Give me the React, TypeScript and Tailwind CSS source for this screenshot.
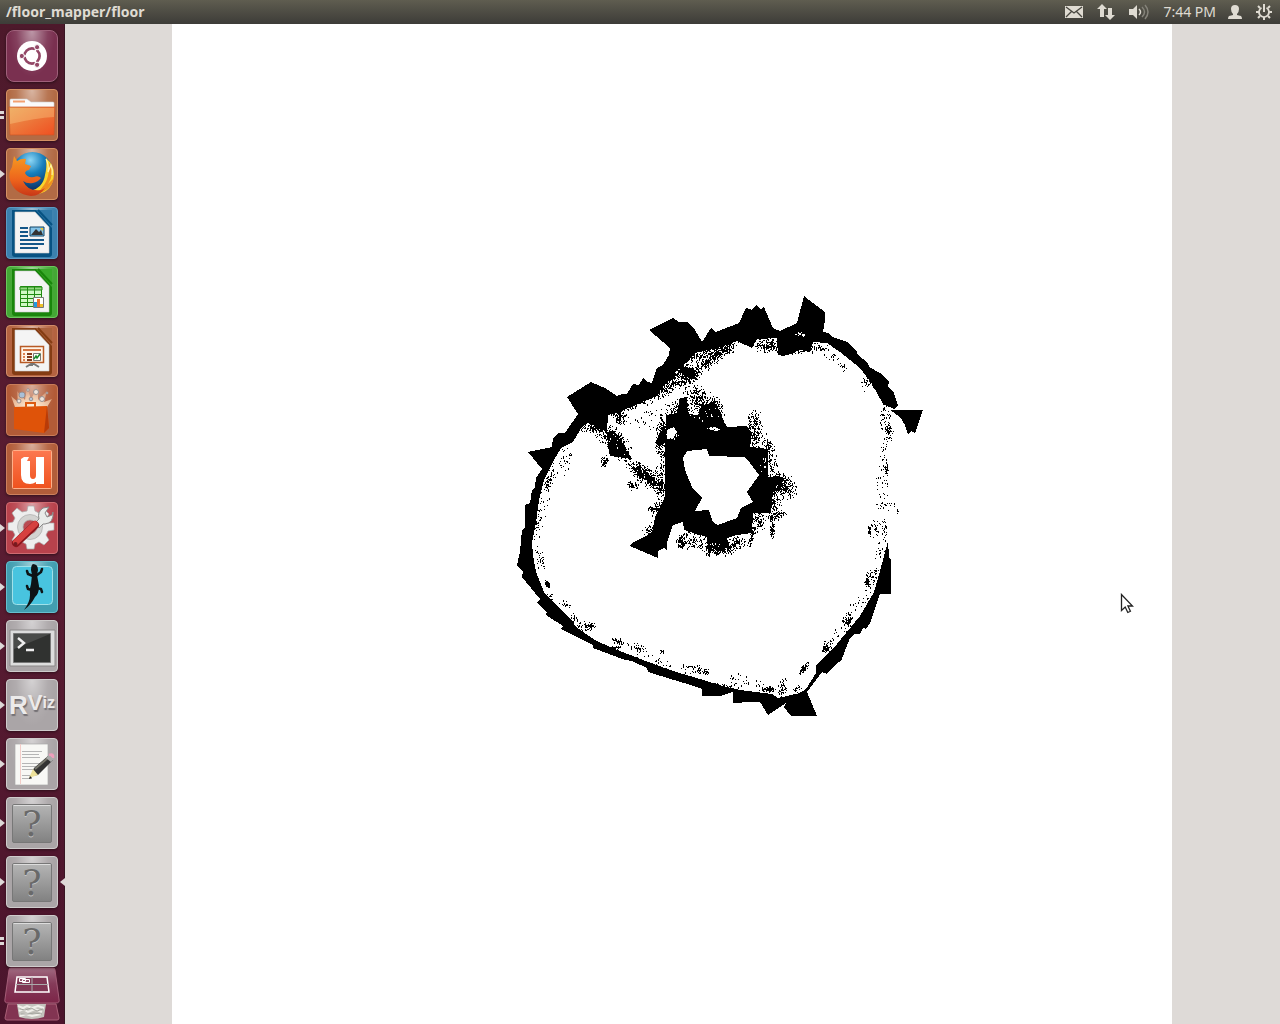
import React from "react";

type Cluster = [cx: number, cy: number, rx: number, ry: number, angle: number, count: number];

/* Obstacle cells scattered round the solid walls. */
const occupied: Cluster[] = [
  [716, 352, 24, 8, -28, 420],
  [698, 362, 22, 11, -30, 420],
  [690, 373, 9, 8, -10, 260],
  [672, 384, 26, 7, -22, 280],
  [640, 402, 32, 4, -20, 90],
  [620, 415, 7, 9, 0, 110],
  [640, 418, 30, 14, -20, 40],
  [766, 345, 13, 7, 0, 190],
  [795, 348, 20, 6, 0, 160],
  [819, 347, 10, 4, 10, 30],
  [832, 356, 14, 6, 40, 18],
  [843, 366, 6, 6, 0, 14],
  [867, 382, 8, 9, 30, 45],
  [885, 418, 6, 16, 0, 50],
  [889, 432, 5, 9, 0, 45],
  [883, 458, 5, 20, 0, 26],
  [886, 467, 2, 7, 0, 40],
  [882, 485, 6, 18, 0, 26],
  [884, 505, 12, 9, 0, 24],
  [897, 511, 1, 3, 0, 9],
  [869, 530, 2, 7, 0, 25],
  [875, 528, 6, 12, 0, 35],
  [884, 530, 3, 12, 0, 25],
  [880, 552, 6, 12, 0, 18],
  [872, 577, 6, 14, 20, 60],
  [867, 581, 2, 5, 0, 45],
  [862, 603, 12, 12, 0, 22],
  [847, 619, 5, 9, 30, 50],
  [848, 622, 2, 3, 30, 25],
  [838, 636, 8, 8, 0, 12],
  [827, 645, 5, 7, 25, 30],
  [825, 648, 3, 3, 25, 40],
  [804, 668, 3, 8, 35, 55],
  [798, 690, 5, 5, 0, 22],
  [782, 687, 5, 9, 20, 55],
  [768, 689, 8, 3, -8, 65],
  [745, 682, 20, 7, 10, 30],
  [722, 685, 18, 3, 0, 32],
  [706, 671, 3, 3, 20, 30],
  [700, 670, 6, 4, 20, 20],
  [690, 667, 12, 6, 0, 28],
  [661, 651, 3, 2, 0, 16],
  [658, 662, 22, 6, 20, 20],
  [637, 648, 10, 5, 20, 32],
  [618, 641, 9, 3, 20, 35],
  [615, 647, 5, 2, 0, 28],
  [590, 626, 4, 4, 0, 45],
  [585, 625, 11, 5, 0, 40],
  [574, 619, 6, 5, 40, 22],
  [566, 604, 7, 4, 0, 18],
  [550, 598, 4, 5, 0, 14],
  [547, 584, 2, 5, -25, 35],
  [540, 560, 4, 14, -10, 34],
  [537, 527, 6, 18, 10, 38],
  [542, 500, 7, 18, 10, 22],
  [547, 485, 3, 8, 15, 30],
  [549, 476, 5, 14, 15, 40],
  [565, 460, 7, 14, 15, 30],
  [592, 427, 14, 5, 0, 110],
  [604, 461, 4, 6, 0, 45],
  [600, 430, 9, 14, -35, 80],
  [617, 443, 10, 21, -30, 220],
  [644, 474, 9, 24, -50, 320],
  [632, 485, 6, 4, 0, 45],
  [660, 482, 6, 20, 0, 150],
  [653, 509, 6, 2, 15, 40],
  [657, 508, 7, 8, 0, 50],
  [661, 437, 6, 22, 0, 230],
  [681, 411, 15, 14, 0, 220],
  [695, 392, 13, 8, 25, 90],
  [696, 402, 12, 11, 25, 110],
  [711, 412, 13, 18, -15, 320],
  [754, 420, 7, 11, 0, 85],
  [754, 435, 11, 13, 0, 170],
  [768, 445, 7, 4, 45, 50],
  [771, 462, 7, 14, 0, 70],
  [779, 483, 13, 11, 0, 280],
  [786, 488, 10, 12, 0, 110],
  [773, 502, 10, 12, 0, 100],
  [777, 515, 9, 4, -15, 80],
  [772, 528, 3, 9, 0, 65],
  [756, 520, 12, 11, 0, 110],
  [751, 537, 2, 11, 15, 60],
  [735, 543, 12, 8, -25, 120],
  [716, 547, 14, 9, 0, 260],
  [693, 540, 12, 10, 0, 90],
  [681, 541, 5, 7, 0, 110],
  [650, 530, 8, 7, 0, 50],
];

/* Free cells left inside the solid walls. */
const free: Cluster[] = [
  [703, 357, 16, 4, -30, 60],
  [694, 363, 8, 4, -20, 50],
  [677, 377, 11, 3, -30, 24],
  [800, 334, 6, 2, 0, 16],
  [768, 343, 10, 5, 0, 14],
  [692, 408, 5, 9, 0, 30],
  [710, 415, 13, 9, 0, 12],
  [671, 434, 6, 6, 0, 40],
  [618, 443, 8, 12, -30, 14],
  [644, 477, 9, 12, -50, 14],
  [754, 437, 6, 10, 0, 14],
  [782, 485, 9, 8, 0, 10],
  [716, 546, 12, 6, 0, 10],
  [764, 462, 5, 12, 0, 10],
];

function scatter(clusters: Cluster[], seed: number): string {
  let state = seed;
  const next = () => {
    state = (Math.imul(state, 1664525) + 1013904223) >>> 0;
    return state / 4294967296;
  };
  const cells = new Set<string>();
  for (const [cx, cy, rx, ry, angle, count] of clusters) {
    const turn = (angle * Math.PI) / 180;
    for (let i = 0; i < count; i++) {
      const radius = Math.pow(next(), 0.75) * (0.7 + next() * 0.5);
      const theta = next() * Math.PI * 2;
      const u = Math.cos(theta) * radius * rx;
      const v = Math.sin(theta) * radius * ry;
      const x = Math.round(cx + u * Math.cos(turn) - v * Math.sin(turn));
      const y = Math.round(cy + u * Math.sin(turn) + v * Math.cos(turn));
      const run = next() < 0.2 ? 2 : 1;
      cells.add(`M${x} ${y}h1v${run}h-1z`);
    }
  }
  return [...cells].join("");
}

const occupiedCells = scatter(occupied, 7);
const freeCells = scatter(free, 19);

function FloorMap() {
  return (
    <svg viewBox="172 24 1000 1000" className="block w-full" shapeRendering="crispEdges" role="img" aria-label="Floor map">
      <path d="M898 405L894 393 888 387 889 382 880 373 869 367 868 363 858 355 857 352 847 342 833 337 828 333 823 332 825 320 825 312 813 303 804 296 797 323 780 331 773 328 764 307 761 309 756 305 752 310 746 308 739 323 716 332 711 328 702 342 695 330 687 322 679 322 673 318 649 330 670 348 669 355 663 365 657 368 652 383 648 382 643 378 639 385 633 384 627 394 622 394 617 396 605 388 591 382 567 397 578 414 565 433 558 433 553 438 552 447 528 452 542 469 536 478 535 487 532 490 530 503 525 505 525 528 522 530 520 552 517 565 523 572 522 577 540 599 537 603 547 612 546 615 563 626 561 629 593 645 593 648 625 660 632 661 647 668 648 672 697 687 702 689 702 696 720 696 733 692 733 703 750 702 760 702 768 715 786 703 784 707 791 716 817 716 807 692 822 672 827 674 838 662 841 661 850 638 855 634 860 634 863 628 866 629 870 623 880 594 891 594 891 560 889 557 888 541 883 560 878 578 874 592 860 616 846 633 832 650 816 665 816 673 806 689 800 693 778 698 772 694 740 690 723 686 700 679 673 671 643 660 610 647 595 640 576 627 571 619 552 601 544 592 536 572 533 555 532 543 536 523 539 500 544 480 554 460 561 448 573 442 582 427 588 423 597 427 607 432 608 415 620 412 637 404 657 396 663 386 680 375 674 373 683 366 695 353 718 348 737 341 752 348 757 339 777 338 778 355 783 356 795 353 797 349 810 352 813 342 827 343 840 352 860 368 872 384 883 404 894 409Z" />
      <path d="M890 410H923L915 433 911 431 908 434 905 425 900 417Z" />
      <path fillRule="evenodd" d="M665 443L666 415 677 413 680 398 687 397 688 414 698 415 703 405 715 403 722 418 727 427 747 426 752 433 750 447 768 449 768 477 779 476 783 480 781 490 773 492 771 513 753 513 752 533 737 535 727 538 725 551 708 551 707 537 693 533 684 530 683 522 673 525 667 543 667 550 664 548 658 551 658 558 630 546 632 543 648 535 652 533 655 517 665 497ZM687 451L707 449 709 456 745 457 750 463 759 475 747 492 753 502 741 508 737 518 718 525 713 522 709 510 695 511 702 498 692 487 685 470 683 458Z" />
      <path d="M607 432L613 431 620 437 627 450 632 459 618 457 610 456 608 447ZM634 468L641 466 649 475 657 483 654 486 646 480 636 475Z" />
      <path d="M655 443L665 425V443L659 447ZM699 410L714 401 722 415 722 427H699ZM682 366L694 370 696 380 684 376 672 381Z" />
      <path d="M705 428L715 427 721 430 716 431ZM667 430L674 427 677 432 674 437 667 439Z" fill="#fff" />
      <path d={occupiedCells} />
      <path d={freeCells} fill="#fff" />
    </svg>
  );
}

function Page({ dark, light, children }: { dark: string; light: string; children: React.ReactNode }) {
  return (
    <>
      <path d="M6 3h40v44q0 3-3 3H9q-3 0-3-3z" fill={dark} />
      <path d="M30 3h16v18z" fill={light} />
      <path d="M32 3l14 15" stroke={dark} strokeWidth="2" />
      <path d="M9 5h20l14 15v26H9z" fill="#f4f4f4" stroke="#ccc" strokeWidth=".6" />
      {children}
    </>
  );
}

function Question() {
  return (
    <>
      <defs>
        <linearGradient id="unknown" x2="0" y2="1">
          <stop stopColor="#b5b5b5" />
          <stop offset="1" stopColor="#818181" />
        </linearGradient>
      </defs>
      <rect x="6.500" y="7.500" width="39" height="38" rx="1.500" fill="url(#unknown)" stroke="#777" />
      <path d="M7.500 8.500h37" stroke="#ddd" />
      <g fontFamily="'DejaVu Serif', serif" fontSize="36" textAnchor="middle">
        <text x="26" y="40" fill="#c4c4c4" aria-hidden="true">?</text>
        <text x="26" y="39" fill="#696969">?</text>
      </g>
    </>
  );
}

const art: Record<string, React.ReactNode> = {
  dash: (
    <>
      <circle cx="26" cy="26" r="15" fill="#fff" />
      <circle cx="26" cy="26" r="7.600" fill="none" stroke="#934766" strokeWidth="2.700" />
      <g stroke="#fff" strokeWidth="1.500">
        <path d="M26 26h-11M26 26l5.500-9.500M26 26l5.500 9.500" />
      </g>
      <circle cx="26" cy="26" r="5.500" fill="#fff" />
      <g fill="#934766" stroke="#fff">
        <circle cx="15.800" cy="26" r="2.600" />
        <circle cx="31.100" cy="17.200" r="2.600" />
        <circle cx="31.100" cy="34.800" r="2.600" />
      </g>
    </>
  ),
  files: (
    <>
      <defs>
        <linearGradient id="folder" x2="1" y2="1">
          <stop stopColor="#e99b52" />
          <stop offset="1" stopColor="#f04f20" />
        </linearGradient>
      </defs>
      <path d="M4 20V11q0-1 1-1h16l4 3h22q1 0 1 1v6z" fill="#fafafa" stroke="#ccc" strokeWidth=".6" />
      <path d="M7 12.500h12" stroke="#f2a070" strokeWidth="2" />
      <path d="M3 18h46l-1 28H4z" fill="url(#folder)" stroke="#cc5727" strokeWidth=".7" />
      <path d="M4 19h44v9Q30 29 4 35z" fill="#ffe59a" opacity=".3" />
    </>
  ),
  firefox: (
    <>
      <defs>
        <radialGradient id="globe" cx=".45" cy=".2" r=".8">
          <stop stopColor="#8ed7f6" />
          <stop offset=".4" stopColor="#1880bd" />
          <stop offset="1" stopColor="#062456" />
        </radialGradient>
        <linearGradient id="fox" x2="0" y2="1">
          <stop stopColor="#f69a21" />
          <stop offset=".6" stopColor="#ed631c" />
          <stop offset="1" stopColor="#c83716" />
        </linearGradient>
      </defs>
      <circle cx="26.500" cy="24.500" r="20.500" fill="url(#globe)" />
      <path d="M40 10q8 7 8 16-1 17-16 20l-8-3q13-3 15-16 2-7 1-17z" fill="#fbd52b" />
      <path d="M43 14q6 12-1 22l6-6q-3 13-18 16 10-9 12-18 2-8 1-14z" fill="#f0901f" />
      <path d="M40 11q3 6 2 13l3-7q2 5 1 10" fill="none" stroke="#fff3a8" strokeWidth="1.200" />
      <path d="M6 19l2-11 3 5q5-3 9-2l-1 5 6 2-2 4q-3 0-4 3 2 5 9 4 4-2 7 1-3 4-8 5-6 1-10-2 5 11 18 9l4-2q-5 8-14 8Q8 46 4 32q-2-7 2-13z" fill="url(#fox)" />
    </>
  ),
  writer: (
    <Page dark="#075282" light="#2f78a8">
      <path d="M14 21h8m-8 4h8m-8 4h8m-8 4h24m-24 4h24m-24 4h18" stroke="#145789" strokeWidth="2" />
      <path d="M24 20h14v9H24z" fill="#83c3e8" stroke="#104467" />
      <path d="M25 28l5-6 3 3 2-2 2 5z" fill="#333" />
      <path d="M34 21h3v3z" fill="#f1c52e" />
    </Page>
  ),
  calc: (
    <Page dark="#19850b" light="#39a92a">
      <path d="M14.500 20.500h21v20h-21z" fill="#d1f8c6" stroke="#218a12" />
      <path d="M14 21h22v3H14zM14 28.500h22M14 32.500h22M14 36.500h22M21.500 20v21M28.500 20v21" fill="#92d981" stroke="#218a12" />
      <path d="M27.500 31.500h10v10h-10z" fill="#fff" stroke="#777" />
      <path d="M29.500 41v-5" stroke="#239be0" strokeWidth="3" />
      <path d="M32.500 41v-8" stroke="#ef7128" strokeWidth="3" />
      <path d="M35.500 41v-3" stroke="#ecc12a" strokeWidth="3" />
    </Page>
  ),
  impress: (
    <Page dark="#843c13" light="#ab623d">
      <path d="M14.500 21.500h23v16h-23z" fill="#fff5e8" stroke="#b85a25" strokeWidth="1.500" />
      <path d="M17 25h18" stroke="#d37745" strokeWidth="2" />
      <path d="M17 29h2m-2 3h2m-2 3h2" stroke="#df8251" strokeWidth="2" />
      <path d="M21 29h5m-5 3h5m-5 3h5" stroke="#823b1b" strokeWidth="2" />
      <path d="M27.500 28.500h7v7h-7z" fill="#fff" stroke="#777" />
      <path d="M28 34l2-3 1 2 3-4" fill="none" stroke="#188c29" strokeWidth="1.500" />
      <path d="M20 42l5-3h3l5 3M26 38v3" fill="none" stroke="#777" strokeWidth="2" />
    </Page>
  ),
  software: (
    <>
      <defs>
        <radialGradient id="burst" cx=".5" cy="1" r="1">
          <stop stopColor="#fff6e2" />
          <stop offset=".5" stopColor="#ffe0c0" stopOpacity=".7" />
          <stop offset="1" stopColor="#ffe0c0" stopOpacity="0" />
        </radialGradient>
      </defs>
      <path d="M9 23L5 12l7 6L11 7l8 9L21 3l4 12L32 3l0 13 9-9-3 11 8-3-5 8z" fill="url(#burst)" />
      <g fill="#efe5dc" stroke="#978f90">
        <circle cx="16" cy="11" r="3" fill="#a9c0d8" />
        <circle cx="30" cy="8" r="2.500" />
        <circle cx="25" cy="15" r="1.800" fill="#b8c8d8" />
        <circle cx="36" cy="15" r="2.500" />
        <circle cx="13" cy="17" r="2" />
        <circle cx="22" cy="6" r="1.300" />
        <circle cx="41" cy="9" r="1" />
      </g>
      <path d="M8 23l33-1 2 22-5 5-30-4z" fill="#df5309" />
      <path d="M41 22l2 22-5 5z" fill="#b83b08" />
      <path d="M20 24v-5h9v5" fill="none" stroke="#dc5b12" strokeWidth="2" />
    </>
  ),
  ubuntuone: (
    <>
      <defs>
        <linearGradient id="one" x2="0" y2="1">
          <stop stopColor="#fc7850" />
          <stop offset="1" stopColor="#ef521e" />
        </linearGradient>
      </defs>
      <rect x="6.500" y="7.500" width="39" height="38" rx="1" fill="url(#one)" stroke="#ffaf89" />
      <path d="M15 16l3-2h5l-2 4h3v14q0 4 3 4t3-4V14h8v27h-8v-2q-3 2-6 2-9 0-9-9z" fill="#fff" />
    </>
  ),
  settings: (
    <>
      <g fill="#eee" stroke="#aaa" strokeWidth=".7">
        <path d="M21 9l1-5h6l1 5 4 2 5-4 5 5-3 5 2 4h6v7l-6 1-2 4 3 5-5 5-5-3-4 2-1 5h-7l-1-5-4-2-5 3-5-5 3-5-2-4-5-1v-7l5-1 2-4-3-5 5-5 5 4z" />
        <circle cx="24" cy="25" r="12.500" fill="#d3d3d1" />
        <circle cx="24" cy="25" r="7" fill="#b94b52" />
      </g>
      <path d="M29 21l4-4q-2-7 4-11l6-1-4 6 2 4 5-2 1-3q1 11-8 12h-2l-4 4z" fill="#e9ebe9" stroke="#888" />
      <path d="M29 23L10 41" stroke="#8d161c" strokeWidth="8" strokeLinecap="round" />
      <path d="M29 22L10 40" stroke="#d6403f" strokeWidth="6" strokeLinecap="round" />
      <circle cx="9.500" cy="42" r="2" fill="#761b20" />
    </>
  ),
  gecko: (
    <>
      <rect x="6.500" y="5.500" width="40" height="38" rx="4" fill="#48c4df" stroke="#a0e1e9" />
      <path d="M27 3q5 0 5 6l-1 5 2 11q0 8-4 11-4 8-11 13 6-8 6-15-1-6 1-11l1-9-1-5q0-5 2-6z" fill="#0d1416" />
      <path d="M27 15l-5-2-1-3M31 14l4-3 1-3M26 29l-4-1-1-3M31 27l4 1 1 3" fill="none" stroke="#0d1416" strokeWidth="2.500" strokeLinecap="round" />
    </>
  ),
  terminal: (
    <>
      <path d="M4 10h45v36H4z" fill="#ddd" stroke="#8a8888" />
      <path d="M7.500 13.500h37v29h-37z" fill="#303230" stroke="#777" />
      <path d="M8 14h36L8 29z" fill="#545654" opacity=".7" />
      <path d="M12 18l6 5-6 5M20 30h8" fill="none" stroke="#eee" strokeWidth="2.400" />
    </>
  ),
  editor: (
    <>
      <path d="M9 6h33v41H9z" fill="#f8f8f5" stroke="#aaa" strokeWidth=".7" />
      <path d="M14.500 6v40" stroke="#f3cdc8" />
      <path d="M16 13.500h20M16 16.500h17M16 19.500h18M16 25.500h18M16 28.500h15M16 31.500h17M16 37.500h9M16 40.500h10" stroke="#b5b5b5" />
      <path d="M25 38l3-8 14-12 5 4-15 15z" fill="#333" />
      <path d="M29 31l14-12" stroke="#77766c" strokeWidth="2" />
      <path d="M27 31l5 6-9 3z" fill="#eee29b" />
      <path d="M23 41l1-3 2 2z" fill="#222" />
      <path d="M40 20l3-3 5 4-3 3z" fill="#aaa" />
      <path d="M43 17q5-2 4 3" fill="#f3a4bf" stroke="#ed9ebb" strokeWidth="2.500" />
    </>
  ),
  unknown: <Question />,
};

type App = { name: string; icon: string; tile: string; pips: number; focused?: boolean };

const orange = "bg-[#b26b45] border-[#d49164]";
const gray = "bg-[#aaa5a7] border-[#cfcccc]";

const apps: App[] = [
  { name: "Dash home", icon: "dash", tile: "bg-[#7a3050] border-[#9f607a] rounded-lg", pips: 0 },
  { name: "Files", icon: "files", tile: orange, pips: 2 },
  { name: "Firefox", icon: "firefox", tile: orange, pips: 1 },
  { name: "LibreOffice Writer", icon: "writer", tile: "bg-[#3b80ae] border-[#5b9bc5]", pips: 0 },
  { name: "LibreOffice Calc", icon: "calc", tile: "bg-[#44a735] border-[#6bc75c]", pips: 0 },
  { name: "LibreOffice Impress", icon: "impress", tile: "bg-[#b46340] border-[#d18c69]", pips: 0 },
  { name: "Software Center", icon: "software", tile: "bg-[#b25b37] border-[#c97c59]", pips: 0 },
  { name: "Ubuntu One", icon: "ubuntuone", tile: "bg-[#b25d3a] border-[#cd805d]", pips: 0 },
  { name: "System Settings", icon: "settings", tile: "bg-[#b8424c] border-[#ce6b71]", pips: 1 },
  { name: "Gecko", icon: "gecko", tile: "bg-[#429eb0] border-[#65bfce]", pips: 1 },
  { name: "Terminal", icon: "terminal", tile: gray, pips: 1 },
  { name: "RViz", icon: "rviz", tile: gray, pips: 1 },
  { name: "Text Editor", icon: "editor", tile: gray, pips: 1 },
  { name: "Unknown application 1", icon: "unknown", tile: gray, pips: 1 },
  { name: "Unknown application 2", icon: "unknown", tile: gray, pips: 1, focused: true },
  { name: "Unknown application 3", icon: "unknown", tile: gray, pips: 2 },
];

function Launcher() {
  return (
    <nav aria-label="Launcher" className="relative z-10 flex w-16 shrink-0 flex-col bg-[#551c30] bg-linear-to-b from-[#4d192b] via-[#5a1d32] to-[#4b142c] pt-1.5 shadow-[1px_0_0_#391523]">
      <ul className="flex flex-col gap-[7px]">
        {apps.map((app) => (
          <li key={app.name} className="relative flex pl-1.5">
            {app.pips === 1 && <span className="absolute top-5.5 left-0 border-y-4 border-l-5 border-y-transparent border-l-[#ded9d8]" />}
            {app.pips === 2 && <span className="absolute top-5.5 left-0 h-2 w-1 border-y-3 border-[#ded9d8]" />}
            {app.focused && <span className="absolute top-5.5 -right-px border-y-4 border-r-5 border-y-transparent border-r-[#ded9d8]" />}
            <button
              type="button"
              aria-label={app.name}
              className={`relative size-[52px] overflow-hidden rounded border ${app.tile} bg-[radial-gradient(ellipse_at_50%_0%,rgba(255,255,255,0.5),rgba(255,255,255,0.08)_45%,transparent_65%)] shadow-[0_1px_3px_rgba(0,0,0,0.45)]`}
            >
              {app.icon === "rviz" ? (
                <span className="flex items-center justify-center font-['Liberation_Sans_Narrow','Liberation_Sans',sans-serif] text-[26px] leading-none font-bold text-[#eceaea] [text-shadow:1px_2px_1px_#757175]">
                  R<span className="pb-1 text-[22px] leading-none">V</span><span className="pb-1 text-[16px] leading-none">iz</span>
                </span>
              ) : (
                <svg viewBox="1 1 50 50" className="block size-full" fill="none">
                  {art[app.icon]}
                </svg>
              )}
            </button>
          </li>
        ))}
      </ul>
      <svg viewBox="0 0 64 57" className="block h-[57px] w-16" role="img" aria-label="Workspace switcher and trash">
        <defs>
          <linearGradient id="switcher" x2="0" y2="1">
            <stop stopColor="#a06b81" />
            <stop offset=".45" stopColor="#853b59" />
            <stop offset="1" stopColor="#7c2548" />
          </linearGradient>
        </defs>
        <path d="M8 37h48l3 14q0 2-2 2H7q-2 0-2-2z" fill="#823452" stroke="#aa6078" />
        <path d="M17 37h29l-2 13q-12 4-25 0z" fill="#c4c3bd" />
        <path d="M18 39l5 2 4-2 5 2 6-2 6 2M19 44l4-2 5 3 7-3 7 3M20 49l6-2 6 2 9-2" fill="none" stroke="#f0efea" strokeWidth="2" />
        <path d="M20 42l5 1 6-2 6 3 6-2M21 47l7 0 6-1 8 1" fill="none" stroke="#a5a59f" />
        <path d="M11 1h42q2 0 2 2l4 29q1 4-3 4H8q-4 0-3-4L9 3q0-2 2-2z" fill="url(#switcher)" stroke="#a45d77" />
        <path d="M17 10h30l2 15H15z" fill="#803754" stroke="#fff" strokeWidth="1.500" />
        <path d="M32 10v15M16 17.500h32" stroke="#aaa" />
        <path d="M19.500 11.500h6v3h-6zM22.500 12.500h7v3h-7z" fill="#95516c" stroke="#fff" />
      </svg>
    </nav>
  );
}

function TopBar() {
  const indicator = "flex h-6 items-center";
  return (
    <header className="relative z-20 flex h-6 items-center justify-between bg-linear-to-b from-[#5f5d50] to-[#3d3c38] pr-2 pl-1.5 font-['Noto_Sans',sans-serif] text-[#dfdbd2]">
      <h1 className="text-[14px] leading-6 font-bold">/floor_mapper/floor</h1>
      <div className="flex items-center">
        <button type="button" aria-label="Messages" className={`${indicator} mr-3.5`}>
          <svg width="18" height="14" viewBox="0 0 18 14">
            <path d="M0 1h18v12H0z" fill="#dfdbd2" />
            <path d="M1 2l8 6 8-6M1 12l6-6M17 12l-6-6" fill="none" stroke="#47463f" strokeWidth="1.300" />
          </svg>
        </button>
        <button type="button" aria-label="Network" className={`${indicator} mr-3.5`}>
          <svg width="18" height="18" viewBox="0 0 18 18" fill="#dfdbd2">
            <path d="M5 1l5 5H7v8H3V6H0zM11 5h4v7h3l-5 5-5-5h3z" />
          </svg>
        </button>
        <button type="button" aria-label="Sound" className={`${indicator} mr-3.5`}>
          <svg width="20" height="18" viewBox="0 0 20 18">
            <path d="M0 6h4l4-4v14l-4-4H0z" fill="#dfdbd2" />
            <path d="M10 6q3 3 0 6" fill="none" stroke="#dfdbd2" strokeWidth="1.500" />
            <path d="M13 4q5 5 0 10M16 2q6 7 0 14" fill="none" stroke="#85837a" strokeWidth="1.500" />
          </svg>
        </button>
        <button type="button" className="mr-3 text-[14px] leading-6 whitespace-nowrap">7:44 PM</button>
        <button type="button" aria-label="User" className={`${indicator} mr-3.5`}>
          <svg width="14" height="16" viewBox="0 0 14 16" fill="#dfdbd2">
            <path d="M7 1q4 0 4 4 0 3-2 5v1l4 1q1 1 1 3H0q0-2 1-3l4-1v-1Q3 8 3 5q0-4 4-4z" />
          </svg>
        </button>
        <button type="button" aria-label="Session" className={indicator}>
          <svg width="16" height="18" viewBox="0 0 16 18" fill="none" stroke="#dfdbd2">
            <path d="M5.500 4.700a5 5 0 1 0 5 0" strokeWidth="1.800" />
            <path d="M8 1v8" strokeWidth="2" />
            <path d="M0 9h3M13 9h3M8 14v3M2 3l2 2M14 3l-2 2M2 15l2-2M14 15l-2-2" strokeWidth="2" />
          </svg>
        </button>
      </div>
    </header>
  );
}

export default function App() {
  return (
    <div className="flex min-h-screen flex-col bg-[#dedad7]">
      <TopBar />
      <div className="flex flex-1">
        <Launcher />
        <main className="relative flex min-w-0 flex-1 items-start justify-center">
          <div className="w-full max-w-[1000px] bg-white">
            <FloorMap />
          </div>
          <svg width="14" height="21" viewBox="0 0 14 21" className="absolute top-[569px] right-[146px]" aria-hidden="true">
            <path d="M1.500 1.500v16l3.700-3.500 2.600 5.500 2.600-1.200-2.500-5.300h4.600z" fill="#fff" stroke="#222" strokeWidth="1.300" />
          </svg>
        </main>
      </div>
    </div>
  );
}
